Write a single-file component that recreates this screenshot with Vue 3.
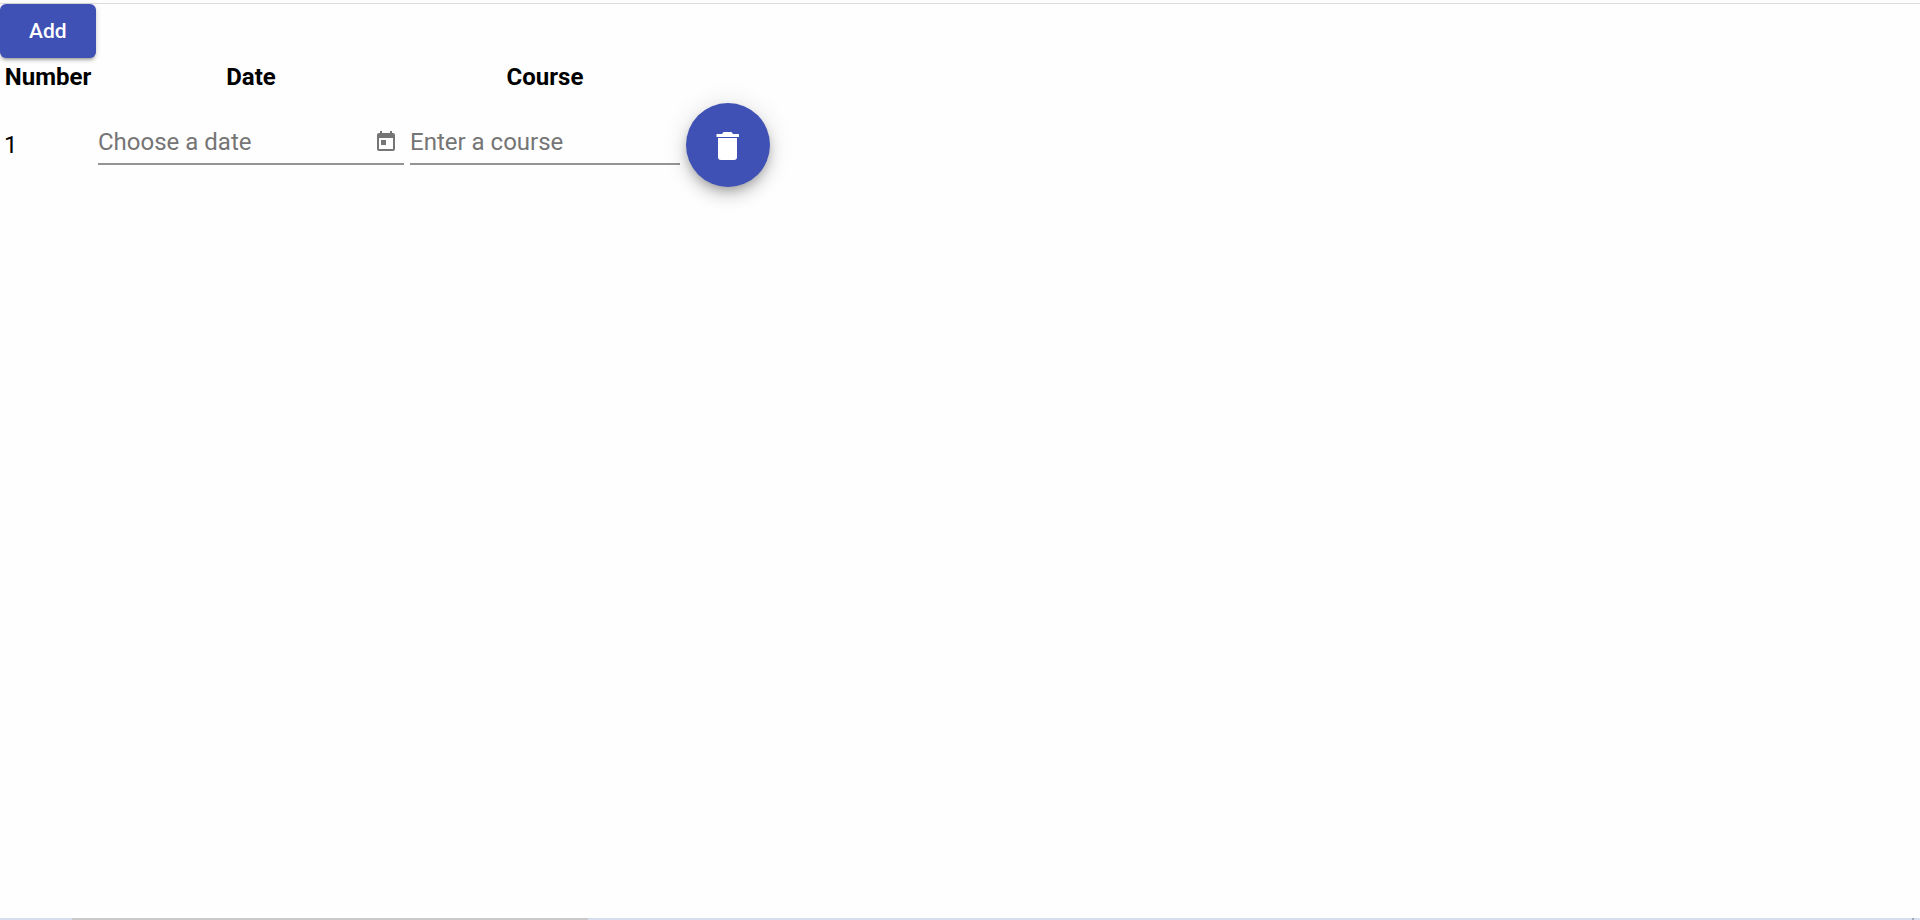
<script setup>
import { ref } from 'vue'

const rows = ref([{ id: 1, date: '', course: '' }])
let nextId = 2

function addRow() {
  rows.value.push({ id: nextId++, date: '', course: '' })
}

function removeRow(id) {
  rows.value = rows.value.filter((row) => row.id !== id)
}
</script>

<template>
  <div class="page">
    <main class="content">
      <button class="add" type="button" @click="addRow">Add</button>
      <table class="courses">
        <thead>
          <tr>
            <th scope="col" class="col-number">Number</th>
            <th scope="col" class="col-date">Date</th>
            <th scope="col" class="col-course">Course</th>
            <td></td>
          </tr>
        </thead>
        <tbody>
          <tr v-for="(row, index) in rows" :key="row.id">
            <td>{{ index + 1 }}</td>
            <td>
              <div class="field">
                <input v-model="row.date" type="text" placeholder="Choose a date" aria-label="Choose a date" />
                <button class="toggle" type="button" aria-label="Open calendar">
                  <svg viewBox="0 0 24 24" width="24" height="24" fill="currentColor" aria-hidden="true">
                    <path d="M19 3h-1V1h-2v2H8V1H6v2H5c-1.11 0-1.99.9-1.99 2L3 19c0 1.1.89 2 2 2h14c1.1 0 2-.9 2-2V5c0-1.1-.9-2-2-2zm0 16H5V8h14v11zM7 10h5v5H7z" />
                  </svg>
                </button>
              </div>
            </td>
            <td>
              <div class="field">
                <input v-model="row.course" type="text" placeholder="Enter a course" aria-label="Enter a course" />
              </div>
            </td>
            <td>
              <button class="fab" type="button" aria-label="Delete row" @click="removeRow(row.id)">
                <svg viewBox="0 0 24 30" width="24" height="30" fill="currentColor" aria-hidden="true">
                  <path d="M.5 4H6l1.500-2h8L17 4h6v3H.5zM2 8h19v19c0 2-1 3-3 3H5c-2 0-3-1-3-3z" />
                </svg>
              </button>
            </td>
          </tr>
        </tbody>
      </table>
    </main>
    <footer class="strip"><span class="thumb"></span><span class="mark"></span></footer>
  </div>
</template>

<style>
body {
  background: #fefefe;
}
</style>

<style scoped>
.page {
  display: flex;
  flex-direction: column;
  min-height: 100vh;
  padding-top: 3px;
  box-sizing: border-box;
  color: #000;
  font: 24px/28px Roboto, "Liberation Sans", sans-serif;
}

.content {
  flex: 1;
  border-top: 1px solid #dcdcdc;
}

.add {
  display: block;
  height: 54px;
  padding: 0 29px;
  border: 0;
  border-radius: 6px;
  background: #3f51b5;
  color: #fff;
  font: 500 21px/54px Roboto, "Liberation Sans", sans-serif;
  box-shadow: 0 4px 2px -3px rgba(0, 0, 0, 0.2), 0 3px 3px rgba(0, 0, 0, 0.14), 0 1px 7px rgba(0, 0, 0, 0.12);
}

.courses {
  border-spacing: 2px;
}

th,
td {
  padding: 2px;
}

th {
  padding: 3px 2px;
}

td {
  text-align: left;
}

.col-number {
  width: 88px;
}

.col-date {
  width: 306px;
}

.col-course {
  width: 270px;
}

.field {
  display: flex;
  align-items: center;
  height: 36px;
  padding-bottom: 3px;
  border-bottom: 2px solid #949494;
  margin-bottom: 2px;
}

.field input {
  flex: 1;
  width: 0;
  height: 28px;
  padding: 0;
  border: 0;
  outline: 0;
  background: transparent;
  color: inherit;
  font: inherit;
}

.field input::placeholder {
  color: #757575;
  opacity: 1;
}

.toggle {
  display: flex;
  align-items: center;
  justify-content: center;
  width: 36px;
  height: 36px;
  padding: 0;
  border: 0;
  border-radius: 50%;
  background: transparent;
  color: #757575;
}

.fab {
  display: flex;
  align-items: center;
  justify-content: center;
  width: 84px;
  height: 84px;
  margin: 5px 0;
  padding: 0;
  border: 0;
  border-radius: 50%;
  background: #3f51b5;
  color: #fff;
  box-shadow: 0 5px 8px -2px rgba(0, 0, 0, 0.2), 0 9px 15px rgba(0, 0, 0, 0.14), 0 2px 27px rgba(0, 0, 0, 0.12);
}

.strip {
  display: flex;
  justify-content: space-between;
  height: 2px;
  background: #d7dfee;
}

.thumb {
  width: 516px;
  margin-left: 72px;
  background: #cacaca;
}

.mark {
  width: 2px;
  margin-right: 6px;
  background: #a3a8b8;
}
</style>
